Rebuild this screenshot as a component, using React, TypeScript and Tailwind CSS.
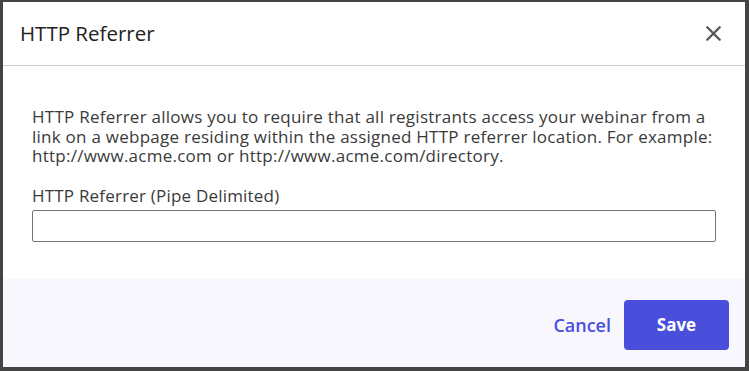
import { X } from "lucide-react";

export default function App() {
  return (
    <div
      className="w-[749px] h-[371px] flex flex-col bg-white border-[#444444] border-l-[3px] border-t-[2px] border-r-[4px] border-b-[4px] overflow-hidden"
      style={{ fontFamily: '"Open Sans", "Liberation Sans", sans-serif' }}
    >
      {/* Header */}
      <div className="h-[64px] flex items-center justify-between pl-[17px] pr-[19px] border-b border-[#cccccc] shrink-0">
        <h2 className="text-[20.5px] text-[#222222] leading-none">HTTP Referrer</h2>
        <button className="text-[#555555]">
          <X className="w-[25px] h-[25px]" strokeWidth={2.2} />
        </button>
      </div>

      {/* Body */}
      <div className="flex-1 px-[29px] pt-[41px]">
        <p className="text-[17px] tracking-[0.25px] leading-[19.5px] text-[#3a3a3a]">
          HTTP Referrer allows you to require that all registrants access your webinar from a link on a
          webpage residing within the assigned HTTP referrer location. For example: http://www.acme.com or
          http://www.acme.com/directory.
        </p>
        <label className="block mt-[20px] text-[17px] tracking-[0.2px] leading-[19.5px] text-[#3a3a3a]">
          HTTP Referrer (Pipe Delimited)
        </label>
        <input
          type="text"
          className="mt-[5px] w-full h-[32px] border border-[#767676] rounded-[2px] px-2 text-[16px] outline-none"
        />
      </div>

      {/* Footer */}
      <div className="h-[88px] bg-[#f7f7fd] flex items-start justify-end pt-[21px] pr-[16px] gap-[13px] shrink-0">
        <button className="h-[50px] text-[18px] font-semibold text-[#4a4fdb]">Cancel</button>
        <button className="w-[105px] h-[50px] rounded-[4px] bg-[#4a4fdb] text-white text-[17px] font-bold">
          Save
        </button>
      </div>
    </div>
  );
}
